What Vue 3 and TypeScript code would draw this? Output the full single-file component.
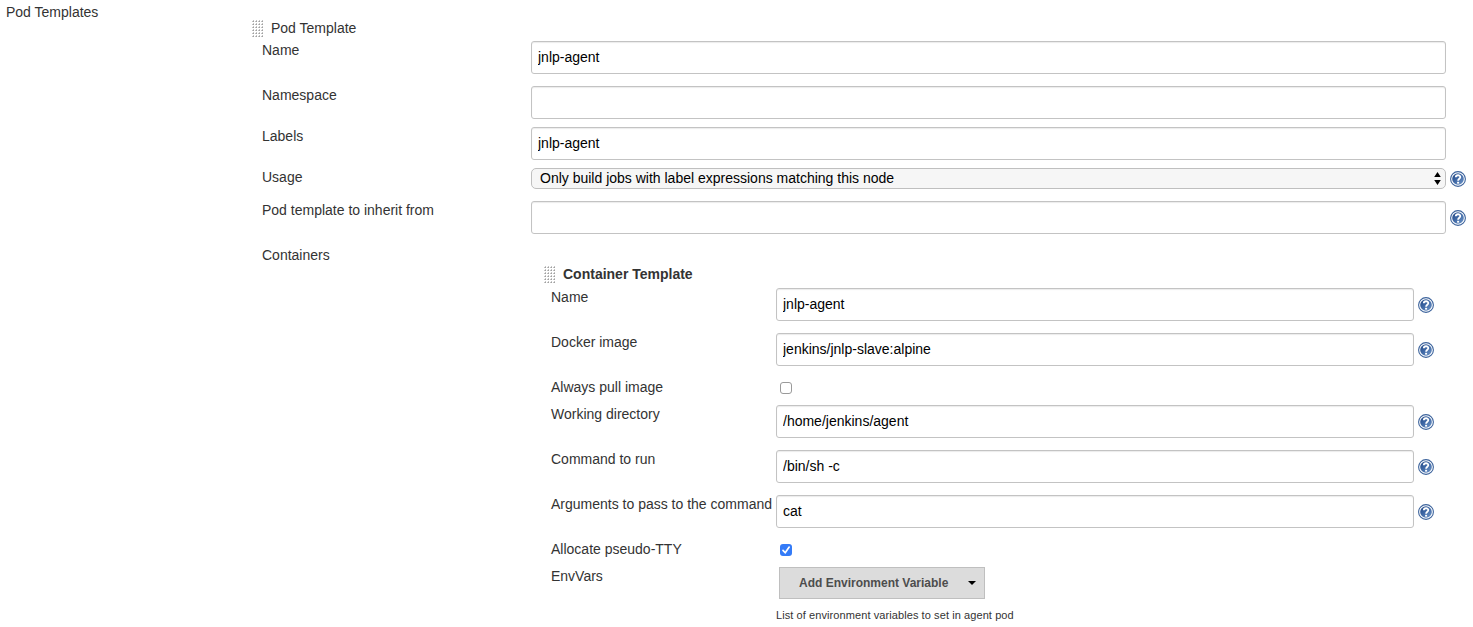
<script setup lang="ts">
import { ref } from 'vue'

interface Field {
  label: string
  kind: 'text' | 'select' | 'check' | 'menu'
  value?: string
  checked?: boolean
  help?: boolean
  height: number
}

const podFields = ref<Field[]>([
  { label: 'Name', kind: 'text', value: 'jnlp-agent', height: 45 },
  { label: 'Namespace', kind: 'text', value: '', height: 41 },
  { label: 'Labels', kind: 'text', value: 'jnlp-agent', height: 41 },
  { label: 'Usage', kind: 'select', value: 'Only build jobs with label expressions matching this node', help: true, height: 33 },
  { label: 'Pod template to inherit from', kind: 'text', value: '', help: true, height: 45 },
])

const containerFields = ref<Field[]>([
  { label: 'Name', kind: 'text', value: 'jnlp-agent', help: true, height: 45 },
  { label: 'Docker image', kind: 'text', value: 'jenkins/jnlp-slave:alpine', help: true, height: 45 },
  { label: 'Always pull image', kind: 'check', checked: false, height: 27 },
  { label: 'Working directory', kind: 'text', value: '/home/jenkins/agent', help: true, height: 45 },
  { label: 'Command to run', kind: 'text', value: '/bin/sh -c', help: true, height: 45 },
  { label: 'Arguments to pass to the command', kind: 'text', value: 'cat', help: true, height: 45 },
  { label: 'Allocate pseudo-TTY', kind: 'check', checked: true, height: 27 },
  { label: 'EnvVars', kind: 'menu', height: 60 },
])
</script>

<template>
  <svg class="defs" width="0" height="0" aria-hidden="true">
    <defs>
      <linearGradient id="help-fill" x1="0" y1="0" x2="1" y2="1">
        <stop offset="0" stop-color="#1f4583" />
        <stop offset="0.45" stop-color="#3f68a5" />
        <stop offset="1" stop-color="#6f96c8" />
      </linearGradient>
      <symbol id="help" viewBox="0 0 16 16">
        <circle cx="8" cy="8" r="7.4" fill="#fff" stroke="#3c639c" stroke-width="1.1" />
        <circle cx="8" cy="8" r="5.8" fill="url(#help-fill)" />
        <path d="M5.8 6.3C5.8 3.6 10.3 3.6 10.3 6.1C10.3 7.8 8.1 7.7 8.1 9.8" fill="none" stroke="#fff" stroke-width="1.8" />
        <rect x="7.1" y="10.8" width="2" height="1.8" fill="#fff" />
      </symbol>
      <pattern id="grip-dot" width="3" height="3" patternUnits="userSpaceOnUse">
        <rect x="1" width="1" height="1" fill="#c4c4c4" />
        <rect y="1" width="1" height="1" fill="#c4c4c4" />
        <rect x="1" y="1" width="1" height="1" fill="#a0a0a0" />
      </pattern>
      <symbol id="grip" viewBox="0 0 12 18">
        <rect width="12" height="18" fill="url(#grip-dot)" />
      </symbol>
    </defs>
  </svg>

  <main class="page">
    <div class="section-label">Pod Templates</div>
    <section class="pod">
      <header class="heading">
        <svg class="grip"><use href="#grip" /></svg>
        <span>Pod Template</span>
      </header>
      <div v-for="f in podFields" :key="f.label" class="row" :style="{ height: f.height + 'px' }">
        <label class="label">{{ f.label }}</label>
        <div class="control">
          <input v-if="f.kind === 'text'" v-model="f.value" class="input" type="text" />
          <div v-else class="select">
            <span>{{ f.value }}</span>
            <svg class="arrows" viewBox="0 0 7 13"><path d="M3.5 0L6.8 5H.2zM3.5 13L6.8 8H.2z" /></svg>
          </div>
          <svg v-if="f.help" class="help"><use href="#help" /></svg>
        </div>
      </div>
      <div class="row">
        <span class="label">Containers</span>
        <section class="container">
          <header class="heading inner-heading">
            <svg class="grip"><use href="#grip" /></svg>
            <strong>Container Template</strong>
          </header>
          <div v-for="f in containerFields" :key="f.label" class="row inner" :style="{ height: f.height + 'px' }">
            <label class="label">{{ f.label }}</label>
            <div v-if="f.kind === 'text'" class="control">
              <input v-model="f.value" class="input" type="text" />
              <svg v-if="f.help" class="help"><use href="#help" /></svg>
            </div>
            <button v-else-if="f.kind === 'check'" class="check" :class="{ on: f.checked }" type="button" @click="f.checked = !f.checked">
              <svg v-if="f.checked" viewBox="0 0 12 12"><path d="M3 6.4L5.2 8.8L9.2 3.1" /></svg>
            </button>
            <div v-else>
              <button class="add" type="button">
                <span>Add Environment Variable</span>
                <svg class="caret" viewBox="0 0 8 4"><path d="M0 0H8L4 4z" /></svg>
              </button>
              <p class="note">List of environment variables to set in agent pod</p>
            </div>
          </div>
        </section>
      </div>
    </section>
  </main>
</template>

<style>
body { background: #fff; overflow: hidden; }
</style>

<style scoped>
.defs { display: block; }
.page {
  display: grid;
  grid-template-columns: 252px 1fr;
  height: 627px;
  overflow: hidden;
  color: #333;
  font: 14px/18px "Liberation Sans", Arial, Helvetica, sans-serif;
}
.section-label { padding: 3px 0 0 6px; }
.pod { padding-top: 19px; }
.heading { display: flex; height: 22px; }
.grip { width: 12px; height: 18px; margin: 1px 7px 0 0; flex: none; }
.row { display: grid; grid-template-columns: 269px 1fr; margin-left: 10px; align-items: start; }
.label { white-space: nowrap; }
.control { display: flex; align-items: center; gap: 4px; }
.input {
  box-sizing: border-box;
  width: 915px;
  height: 33px;
  padding: 0 6px 2px;
  border: 1px solid #c3c3c3;
  border-radius: 3px;
  background: #fff;
  box-shadow: inset 0 1px 1px #ececec;
  color: #000;
  font: inherit;
  outline: none;
}
.select {
  box-sizing: border-box;
  display: flex;
  align-items: center;
  justify-content: space-between;
  width: 915px;
  height: 21px;
  padding: 0 4px 0 8px;
  border: 1px solid #bfbfbf;
  border-radius: 5px;
  background: #f6f6f6;
  color: #000;
}
.select span { padding-bottom: 1px; }
.arrows { width: 7px; height: 13px; }
.help { width: 16px; height: 16px; flex: none; margin-top: 1px; }
.container { padding-top: 19px; margin-left: 13px; }
.inner-heading { height: 23px; }
.inner { grid-template-columns: 225px 1fr; margin-left: 7px; }
.inner .input { width: 638px; }
.check {
  box-sizing: border-box;
  width: 12px;
  height: 12px;
  margin: 4px 0 0 4px;
  padding: 0;
  border: 1px solid #9a9a9a;
  border-radius: 3px;
  background: #fff;
}
.check.on { border: 0; background: #347bf7; }
.check svg { display: block; width: 12px; height: 12px; }
.check path { fill: none; stroke: #fff; stroke-width: 1.7; stroke-linecap: round; stroke-linejoin: round; }
.add {
  box-sizing: border-box;
  display: flex;
  align-items: center;
  width: 206px;
  height: 32px;
  margin-left: 3px;
  padding: 0 8px 0 19px;
  justify-content: space-between;
  border: 1px solid #bfbfbf;
  border-radius: 0;
  background: #dcdcdc;
  color: #4d4d4d;
  font: bold 12px/18px "Liberation Sans", Arial, Helvetica, sans-serif;
}
.caret { width: 8px; height: 4px; fill: #000; }
.note { margin: 7px 0 0; font-size: 11px; letter-spacing: 0.085px; white-space: nowrap; }
</style>
